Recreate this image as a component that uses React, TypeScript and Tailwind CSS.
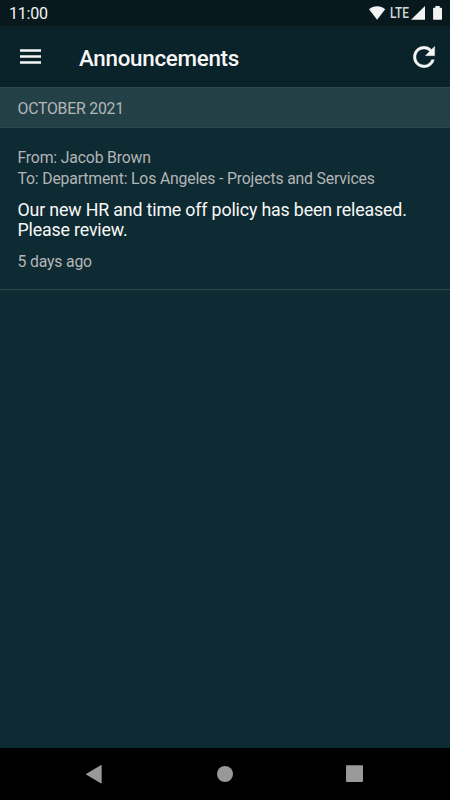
function StatusBar() {
  return (
    <div className="flex h-[26px] items-center bg-[#08191e] pl-[9px] text-[#f2f4f4]">
      <span className="pt-[2px] text-[16px] leading-[26px] tracking-[-0.2px]">11:00</span>
      <svg className="ml-auto h-[26px] w-[82px]" viewBox="0 0 82 26" fill="currentColor">
        <path d="M9.1 19.7L1 9.2C3.2 7.3 6 6.2 9.1 6.2s5.9 1.1 8.1 3L9.1 19.7z" />
        <path d="M57 6v13.8H43L57 6z" />
        <path d="M67.4 6.1v1.6h-1.5c-.5 0-.8.3-.8.8v10.4c0 .5.4.9.9.9h7.1c.5 0 .9-.4.9-.9V8.5c0-.5-.3-.8-.8-.8h-1.5V6.1h-4.3z" />
        <text x="21.9" y="18" fontSize="14.4" fontWeight="500" textLength="19" lengthAdjust="spacingAndGlyphs" fill="#d5d9da">LTE</text>
      </svg>
    </div>
  );
}

function AppBar() {
  return (
    <header className="flex h-[61px] items-center bg-[#0a2229] pr-[10px] pl-5 text-[#f5f6f6]">
      <button aria-label="Menu">
        <svg className="h-[15px] w-[21px]" viewBox="0 0 21 15" fill="currentColor">
          <path d="M0 .2h21v2.5H0zM0 6.2h21v2.5H0zM0 12.2h21v2.5H0z" />
        </svg>
      </button>
      <h1 className="ml-[38px] pt-[2px] text-[22.4px] leading-[28px] font-medium tracking-[-0.3px]">Announcements</h1>
      <button className="ml-auto" aria-label="Refresh">
        <svg className="h-8 w-8" viewBox="0 0 24 24" fill="currentColor" stroke="currentColor" strokeWidth="0.25">
          <path d="M17.65 6.35C16.2 4.9 14.21 4 12 4c-4.42 0-7.99 3.58-7.99 8s3.57 8 7.99 8c3.73 0 6.84-2.55 7.73-6h-2.08c-.82 2.33-3.04 4-5.65 4-3.31 0-6-2.69-6-6s2.69-6 6-6c1.66 0 3.14.69 4.22 1.78L13 11h7V4l-2.35 2.35z" />
        </svg>
      </button>
    </header>
  );
}

interface Announcement {
  from: string;
  to: string;
  message: string;
  age: string;
}

const announcements: Announcement[] = [
  {
    from: 'Jacob Brown',
    to: 'Department: Los Angeles - Projects and Services',
    message: 'Our new HR and time off policy has been released. Please review.',
    age: '5 days ago',
  },
];

function AnnouncementItem({ item }: { item: Announcement }) {
  return (
    <article className="h-[162px] border-b border-[#2b4a50] pt-[19px] pr-[17px] pl-[17.5px] text-[15.8px] tracking-[-0.18px] text-[#b3b5b6]">
      <p className="leading-[21px]">From: {item.from}</p>
      <p className="leading-[21px]">To: {item.to}</p>
      <p className="mt-[11px] text-[17.8px] leading-[20px] tracking-[-0.16px] text-[#f8f9f9]">{item.message}</p>
      <p className="mt-[11px] leading-[21px]">{item.age}</p>
    </article>
  );
}

function NavigationBar() {
  return (
    <nav className="h-[52px] bg-black">
      <svg className="h-[52px] w-full" viewBox="0 0 450 52" fill="#999">
        <path d="M101.7 17.6v17.2c0 .6-.5.8-1 .5l-14.3-8.6c-.5-.3-.5-.7 0-1l14.3-8.5c.5-.4 1-.2 1 .4z" />
        <circle cx="225" cy="26" r="8" />
        <rect x="346" y="17.3" width="17" height="16.8" rx="1" />
      </svg>
    </nav>
  );
}

export default function App() {
  return (
    <div className="flex h-[800px] w-[450px] flex-col overflow-hidden bg-[#0e2a32] font-['Roboto',sans-serif]">
      <StatusBar />
      <AppBar />
      <main className="flex-1">
        <h2 className="h-[41px] border-y border-[#2a484f] bg-[#244047] pl-[17.5px] text-[15.8px] leading-[41px] tracking-[-0.22px] text-[#b3b7b8]">
          OCTOBER 2021
        </h2>
        {announcements.map((item) => (
          <AnnouncementItem key={item.message} item={item} />
        ))}
      </main>
      <NavigationBar />
    </div>
  );
}
